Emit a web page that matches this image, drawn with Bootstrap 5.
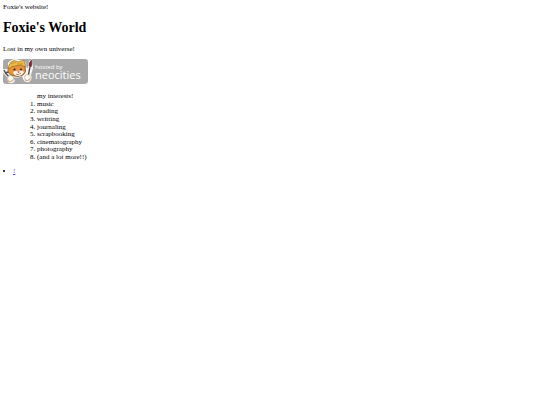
<!DOCTYPE html>
<html lang="en">
<head>
<meta charset="utf-8">
<meta name="viewport" content="width=device-width, initial-scale=1">
<title>Foxie's World</title>
<link href="https://cdn.jsdelivr.net/npm/bootstrap@5.3.0/dist/css/bootstrap.min.css" rel="stylesheet">
<style>
  body { font-family: "Liberation Serif", "Times New Roman", serif; font-size: 7px; line-height: 8px; color: #000; padding: 3px; }
  .site-title { font-size: 14px; line-height: 16px; margin: 9px 0; }
  .host-badge { margin: 6px 0 9px; }
  .host-badge svg { width: 85px; height: 25px; }
  .host-badge text { font-family: "Open Sans", "Noto Sans", sans-serif; fill: #fff; }
  .interests { height: 68px; line-height: 7px; padding-left: 34px; }
  .interests ol { display: contents; }
  .extra-links { margin: 6px 0 0; padding: 0; list-style-position: inside; }
  .extra-links a { color: #5a3fe0; }
</style>
</head>
<body>
<header>
  <p class="m-0">Foxie's website!</p>
  <h1 class="site-title fw-bold">Foxie's World</h1>
  <p class="m-0">Lost in my own universe!</p>
</header>
<main>
  <a class="host-badge d-block" href="#" aria-label="Hosted by Neocities">
    <svg class="d-block" viewBox="0 0 85 25">
      <rect width="85" height="25" rx="3.2" fill="#a8a8a8"/>
      <!-- white outline around the cat and its tools -->
      <path d="M5 4 Q8 0 13 0 L17 1 Q22 0 23 5 L24 9 L25 9 L26 2 L29 0 L30 9 L28 16 Q30 20 26 23 Q22 24 20 20 L19 17 Q14 20 10 18 L12 22 Q9 26 5 23 L4 18 L0 14 L0 10 L5 10 Z" fill="#f7f5f2"/>
      <path d="M6 8 Q3 13 8 16 Q14 19 20 16 Q24 13 22 8 L21 4 L15 5 L8 4 Z" fill="#e9913d" stroke="#65401d" stroke-width=".7"/>
      <path d="M10 13 Q13 11 15 12 Q19 10 21 13 Q19 17 15 17 Q11 17 10 13Z" fill="#fff5e6"/>
      <path d="M5 8 L8 3 Q11 0 15 3 L21 1 L23 8 Q17 5 12 7 Q8 7 6 10Z" fill="#ecbd45" stroke="#8a6521" stroke-width=".6"/>
      <path d="M8 5 L13 3 M14 5 L20 5" stroke="#a67b24" stroke-width=".6"/>
      <circle cx="11.5" cy="10.5" r="1.1" fill="#3b2a20"/>
      <circle cx="18" cy="10.5" r="1.1" fill="#3b2a20"/>
      <path d="M14 12.5 h3 l-1.5 1.5z" fill="#b53c35"/>
      <path d="M13 15 Q15 17 18 14" fill="none" stroke="#713b27" stroke-width=".6"/>
      <path d="M1 11 L2.5 14 L5 13 M2.5 14 L7 19" fill="none" stroke="#4e5354" stroke-width="1.5"/>
      <path d="M27 8 L25 18" stroke="#514447" stroke-width="1.3"/>
      <path d="M26 7 Q26 3 28.5 1 Q29.5 5 28 8Z" fill="#8d2335" stroke="#56202a" stroke-width=".6"/>
      <circle cx="7.5" cy="19.5" r="3" fill="#fffaf0" stroke="#a58b6b" stroke-width=".5"/>
      <circle cx="24.5" cy="18.5" r="3" fill="#fffaf0" stroke="#a58b6b" stroke-width=".5"/>
      <path d="M5 22 Q7 24 10 21 M22 21 Q24 23 27 20" fill="none" stroke="#d99b57" stroke-width=".7"/>
      <text x="32" y="10" font-size="6">hosted by</text>
      <text x="32" y="20" font-size="11">neocities</text>
    </svg>
  </a>
  <section class="interests d-flex flex-column justify-content-between">
    <p class="m-0">my interests!</p>
    <ol>
      <li>music</li>
      <li>reading</li>
      <li>writting</li>
      <li>journaling</li>
      <li>scrapbooking</li>
      <li>cinematography</li>
      <li>photography</li>
      <li>(and a lot more!!)</li>
    </ol>
  </section>
  <ul class="extra-links">
    <li><a href="#">!</a></li>
  </ul>
</main>
<script src="https://cdn.jsdelivr.net/npm/bootstrap@5.3.0/dist/js/bootstrap.bundle.min.js"></script>
</body>
</html>
